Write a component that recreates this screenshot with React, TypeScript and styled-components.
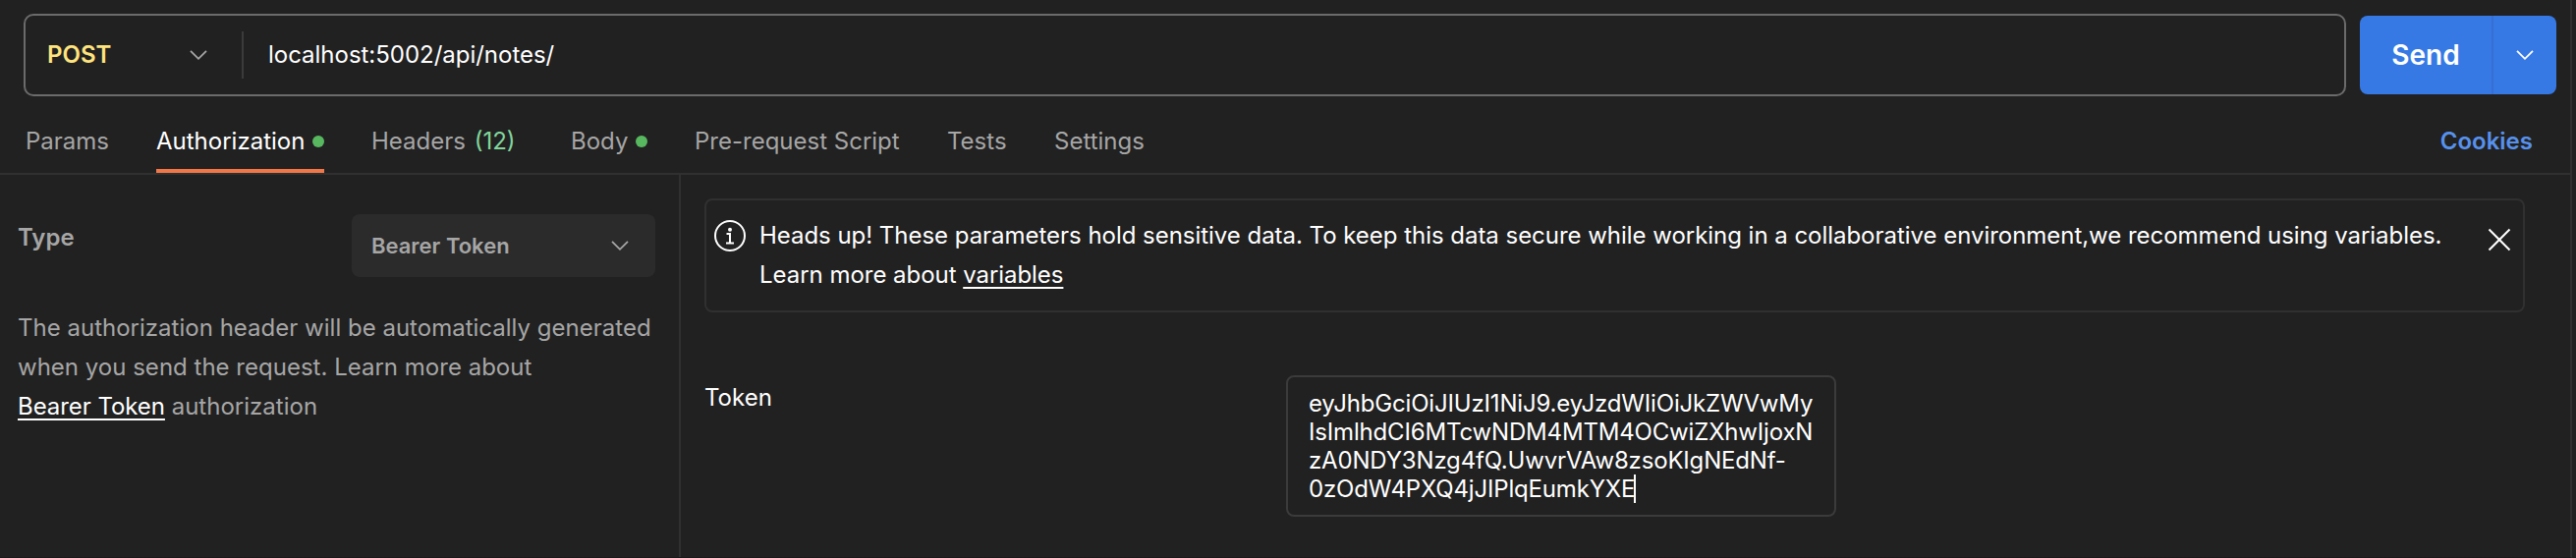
import React from "react";
import styled, { createGlobalStyle } from "styled-components";

const GlobalStyle = createGlobalStyle`
  * { box-sizing: border-box; }
  body { margin: 0; background: #212121; }
`;

const Page = styled.main`
  width: 2622px;
  height: 568px;
  display: flex;
  overflow: hidden;
  background: #212121;
  color: #fff;
  font: 400 24px/40px Inter, sans-serif;
`;

const Builder = styled.div`
  width: 2618px;
  height: 568px;
  border-right: 2px solid #303030;
  border-bottom: 1px solid #1e181a;
  display: flex;
  flex-direction: column;
`;

const RequestBar = styled.div`
  display: flex;
  align-items: center;
  gap: 14px;
  height: 112px;
  padding: 0 14px 0 24px;
`;

const UrlBox = styled.div`
  display: flex;
  align-items: center;
  width: 2364px;
  height: 84px;
  border: 2px solid #6b6b6b;
  border-radius: 10px;
`;

const Method = styled.div`
  display: flex;
  align-items: center;
  justify-content: space-between;
  width: 222px;
  height: 48px;
  padding: 0 35px 0 22px;
  border-right: 2px solid #3b3b3b;
  color: #ffe47e;
  font-weight: 600;
`;

const Url = styled.span`
  padding-left: 25px;
  letter-spacing: -0.02px;
`;

const SendGroup = styled.div`
  display: flex;
  width: 200px;
  height: 80px;
  border-radius: 8px;
  overflow: hidden;
  background: #3779e4;
`;

const SendButton = styled.div`
  display: flex;
  align-items: center;
  justify-content: center;
  width: 136px;
  border-right: 2px solid #356fd4;
  font-size: 28px;
  font-weight: 600;
`;

const SendMenu = styled.div`
  display: flex;
  align-items: center;
  justify-content: center;
  width: 64px;
`;

const TabBar = styled.nav`
  display: flex;
  height: 66px;
  padding: 0 38px 0 26px;
  border-bottom: 2px solid #303030;
`;

const Tab = styled.div<{ $width: number; $active?: boolean }>`
  display: flex;
  align-items: center;
  flex: none;
  width: ${(p) => p.$width}px;
  margin-right: 48px;
  padding-top: ${(p) => (p.$active ? 4 : 0)}px;
  border-bottom: ${(p) => (p.$active ? "4px solid #f27748" : "none")};
  color: ${(p) => (p.$active ? "#fff" : "#a6a6a6")};
  white-space: pre;
`;

const Count = styled.span`
  color: #82d69c;
  margin-left: 2px;
`;

const Dot = styled.i`
  width: 12px;
  height: 12px;
  margin-left: auto;
  border-radius: 50%;
  background: #58b860;
`;

const Cookies = styled.a`
  display: flex;
  align-items: center;
  margin-left: auto;
  color: #5791ec;
  font-weight: 600;
`;

const Panels = styled.div`
  display: flex;
  flex: 1;
`;

const TypePanel = styled.section`
  width: 693px;
  padding: 40px 24px 0 18px;
  border-right: 2px solid #303030;
  color: #a6a6a6;
`;

const TypeRow = styled.div`
  display: flex;
  justify-content: space-between;
  height: 64px;
`;

const TypeLabel = styled.span`
  padding-top: 4px;
  font-weight: 600;
`;

const Select = styled.div`
  display: flex;
  align-items: center;
  justify-content: space-between;
  width: 309px;
  height: 64px;
  padding: 0 27px 0 20px;
  border-radius: 8px;
  background: #2b2b2b;
  font-size: 22px;
  font-weight: 600;
`;

const Description = styled.p`
  margin: 32px 0 0;
  letter-spacing: 0.01px;
  white-space: nowrap;
`;

const Link = styled.a`
  color: #fff;
  letter-spacing: -0.06px;
  text-decoration: underline;
  text-decoration-thickness: 2px;
  text-underline-offset: 4px;
  text-decoration-skip-ink: none;
`;

const AuthPanel = styled.section`
  flex: 1;
  padding: 24px 46px 0 24px;
`;

const Alert = styled.div`
  display: flex;
  width: 1853px;
  height: 116px;
  padding: 16px 12px 0 8px;
  border: 2px solid #303030;
  border-radius: 8px;
`;

const AlertText = styled.p`
  flex: 1;
  margin: 0 0 0 14px;
  letter-spacing: -0.032px;
`;

const InfoIcon = styled.svg`
  flex: none;
  margin-top: 4px;
`;

const CloseIcon = styled.svg`
  flex: none;
  margin-top: 12px;
`;

const TokenRow = styled.div`
  display: flex;
  margin-top: 64px;
`;

const TokenLabel = styled.span`
  width: 592px;
  padding-top: 3px;
`;

const TokenField = styled.div`
  width: 560px;
  height: 144px;
  padding: 12px 21px;
  border: 2px solid #3b3b3b;
  border-radius: 8px;
  line-height: 29px;
  letter-spacing: -0.17px;
  white-space: nowrap;
`;

const Caret = styled.i`
  display: inline-block;
  width: 2px;
  height: 29px;
  margin-left: -1px;
  vertical-align: top;
  background: #fff;
`;

const Chevron = ({ color }: { color: string }) => (
  <svg width="18" height="12" viewBox="0 0 18 12" fill="none" stroke={color} strokeWidth="1.8">
    <path d="M1 1.8 9 9.8l8-8" />
  </svg>
);

const tabs = [
  { label: "Params", width: 85 },
  { label: "Authorization", width: 171, active: true, dot: true },
  { label: "Headers ", width: 155, count: "(12)" },
  { label: "Body", width: 78, dot: true },
  { label: "Pre-request Script", width: 209 },
  { label: "Tests", width: 61 },
  { label: "Settings", width: 94 },
];

const tokenLines = [
  "eyJhbGciOiJIUzI1NiJ9.eyJzdWIiOiJkZWVwMy",
  "IsImlhdCI6MTcwNDM4MTM4OCwiZXhwIjoxN",
  "zA0NDY3Nzg4fQ.UwvrVAw8zsoKIgNEdNf-",
  "0zOdW4PXQ4jJIPlqEumkYXE",
];

export default function App() {
  return (
    <Page>
      <GlobalStyle />
      <Builder>
        <RequestBar>
          <UrlBox>
            <Method>
              POST
              <Chevron color="#a6a6a6" />
            </Method>
            <Url>localhost:5002/api/notes/</Url>
          </UrlBox>
          <SendGroup>
            <SendButton>Send</SendButton>
            <SendMenu>
              <Chevron color="#fff" />
            </SendMenu>
          </SendGroup>
        </RequestBar>
        <TabBar>
          {tabs.map((t) => (
            <Tab key={t.label} $width={t.width} $active={t.active}>
              {t.label}
              {t.count && <Count>{t.count}</Count>}
              {t.dot && <Dot />}
            </Tab>
          ))}
          <Cookies>Cookies</Cookies>
        </TabBar>
        <Panels>
          <TypePanel>
            <TypeRow>
              <TypeLabel>Type</TypeLabel>
              <Select>
                Bearer Token
                <Chevron color="#a6a6a6" />
              </Select>
            </TypeRow>
            <Description>
              The authorization header will be automatically generated
              <br />
              when you send the request. Learn more about
              <br />
              <Link>Bearer Token</Link> authorization
            </Description>
          </TypePanel>
          <AuthPanel>
            <Alert>
              <InfoIcon width="32" height="32" viewBox="0 0 32 32" fill="none" stroke="#fff" strokeWidth="2">
                <circle cx="16" cy="16" r="15" />
                <path d="M12.5 14H16v9M12 23.5h8" />
                <circle cx="16" cy="9.7" r="2" fill="#fff" stroke="none" />
              </InfoIcon>
              <AlertText>
                Heads up! These parameters hold sensitive data. To keep this data secure while working in a
                collaborative environment,we recommend using variables.
                <br />
                Learn more about <Link>variables</Link>
              </AlertText>
              <CloseIcon width="24" height="24" viewBox="0 0 24 24" fill="none" stroke="#fff" strokeWidth="2">
                <path d="M1.5 1.5l21 21M22.5 1.5l-21 21" />
              </CloseIcon>
            </Alert>
            <TokenRow>
              <TokenLabel>Token</TokenLabel>
              <TokenField>
                {tokenLines.map((line, i) => (
                  <div key={line}>
                    {line}
                    {i === tokenLines.length - 1 && <Caret />}
                  </div>
                ))}
              </TokenField>
            </TokenRow>
          </AuthPanel>
        </Panels>
      </Builder>
    </Page>
  );
}
